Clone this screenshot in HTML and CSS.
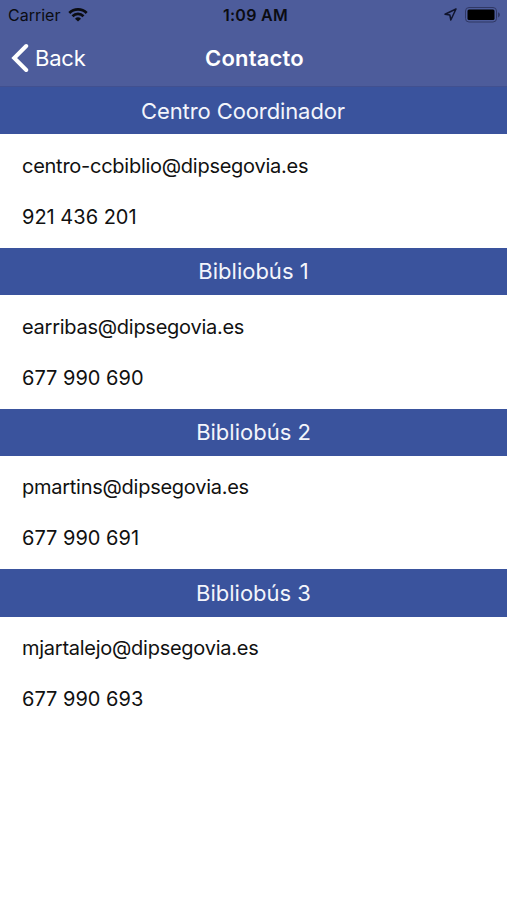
FILE: index.html
```
<!DOCTYPE html>
<html lang="es">
<head>
    <meta charset="UTF-8">
    <meta name="viewport" content="width=device-width, initial-scale=1.0">
    <title>Contacto</title>
    <link rel="stylesheet" href="styles.css">
</head>
<body>
    <header>
        <div class="status">
            <div class="carrier">
                <span>Carrier</span>
                <svg class="wifi" width="20" height="14" viewBox="0 0 20 14">
                    <path d="M1.300 5a12.300 12.300 0 0 1 17.400 0M4.500 8.200a7.800 7.800 0 0 1 11 0" fill="none" stroke="#0b0c12" stroke-width="2.700"/>
                    <path d="M10 13.600L7 10.800a4.300 4.300 0 0 1 6 0z" fill="#0b0c12"/>
                </svg>
            </div>
            <span class="time">1:09 AM</span>
            <div class="indicators">
                <svg class="location" width="13" height="13" viewBox="0 0 13 13">
                    <path d="M12 1L1 6.200l4.900.9.900 4.900z" fill="none" stroke="#10142c" stroke-width="1.500" stroke-linejoin="round"/>
                </svg>
                <svg class="battery" width="36" height="16" viewBox="0 0 36 16">
                    <rect x=".5" y=".5" width="31" height="14.500" rx="3.500" fill="none" stroke="#303865"/>
                    <rect x="2.500" y="2.500" width="27" height="10.500" rx="1.500" fill="#000"/>
                    <path d="M33 5.200q2 .8 2 2.600t-2 2.600z" fill="#303865"/>
                </svg>
            </div>
        </div>
        <nav class="navbar">
            <a href="#" class="back">
                <svg width="18" height="30" viewBox="0 0 18 30">
                    <path d="M15.200 3L3.200 15l12 12" fill="none" stroke="#fff" stroke-width="4" stroke-linecap="round"/>
                </svg>
                <span>Back</span>
            </a>
            <h1>Contacto</h1>
        </nav>
    </header>

    <section>
        <h2 class="centro">Centro Coordinador</h2>
        <p class="mail">centro-ccbiblio@dipsegovia.es</p>
        <p>921 436 201</p>
    </section>
    <section>
        <h2>Bibliobús 1</h2>
        <p class="mail">earribas@dipsegovia.es</p>
        <p>677 990 690</p>
    </section>
    <section>
        <h2>Bibliobús 2</h2>
        <p class="mail">pmartins@dipsegovia.es</p>
        <p>677 990 691</p>
    </section>
    <section>
        <h2>Bibliobús 3</h2>
        <p class="mail">mjartalejo@dipsegovia.es</p>
        <p>677 990 693</p>
    </section>
</body>
</html>
```
FILE: styles.css
```
body {
    font-family: Inter, "Liberation Sans", sans-serif;
    margin: 0;
    padding: 0;
    background: #fff;
    color: #111;
}
header {
    height: 87px;
    box-sizing: border-box;
    background-color: #4d5c9b;
    border-bottom: 1px solid #415090;
}
.status {
    display: grid;
    grid-template-columns: 1fr auto 1fr;
    align-items: center;
    height: 29px;
    padding: 0 6px 0 8px;
    color: #0b0c12;
    font-size: 16px;
}
.carrier, .indicators {
    display: flex;
    align-items: center;
    gap: 8px;
}
.indicators {
    justify-content: flex-end;
}
.time {
    font-weight: 600;
    letter-spacing: 0.3px;
    padding-left: 2px;
}
.navbar {
    display: grid;
    grid-template-columns: 1fr auto 1fr;
    align-items: center;
    height: 57px;
    padding: 0 11px;
    color: #fff;
}
.back {
    display: flex;
    align-items: center;
    gap: 6px;
    color: #fff;
    font-size: 22px;
    letter-spacing: -0.2px;
    text-decoration: none;
}
h1 {
    margin: 0;
    padding-left: 2px;
    font-size: 22px;
    font-weight: 600;
    letter-spacing: 0.2px;
}
section {
    height: 160.8px;
}
h2 {
    display: flex;
    align-items: center;
    justify-content: center;
    height: 47.4px;
    margin: 0 0 6px;
    background: #3a539d;
    color: #f3f5fb;
    font-size: 22px;
    font-weight: 400;
}
.centro {
    padding-right: 21px;
    letter-spacing: -0.1px;
}
p {
    display: flex;
    align-items: center;
    height: 51px;
    margin: 0;
    padding-left: 22px;
    font-size: 20px;
}
.mail {
    letter-spacing: -0.26px;
}
```
